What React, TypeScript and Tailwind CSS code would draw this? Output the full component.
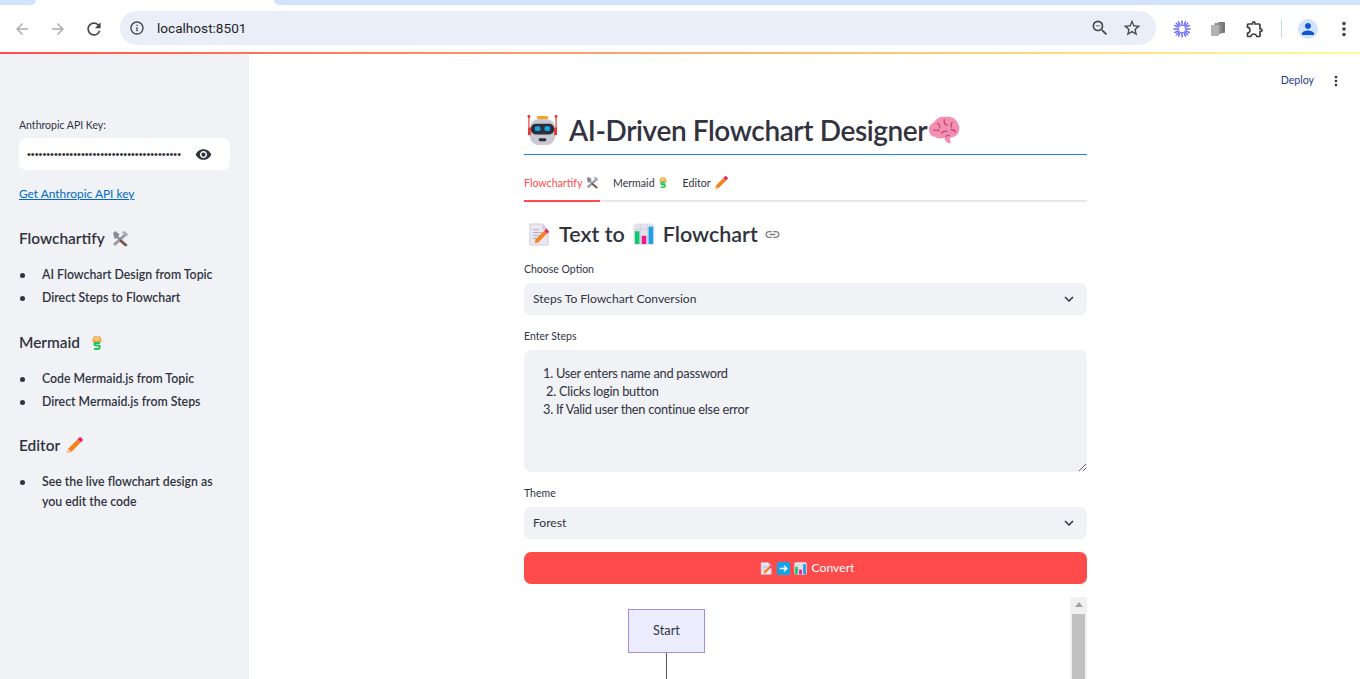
import {
  MdArrowBack,
  MdArrowForward,
  MdRefresh,
  MdInfoOutline,
  MdZoomOut,
  MdStarBorder,
  MdOutlineExtension,
  MdMoreVert,
  MdPerson,
  MdKeyboardArrowDown,
  MdVisibility,
  MdLink,
} from "react-icons/md";

function Robot({ size = 32 }: { size?: number }) {
  return (
    <svg width={size} height={size} viewBox="0 0 32 32">
      <rect x="10" y="1" width="12" height="3" rx="1.5" fill="#f5a623" />
      <circle cx="2" cy="1.5" r="1.5" fill="#e53935" />
      <circle cx="30" cy="1.5" r="1.5" fill="#e53935" />
      <rect x="1.4" y="2" width="1.2" height="13" fill="#e53935" />
      <rect x="29.4" y="2" width="1.2" height="13" fill="#e53935" />
      <rect x="3" y="4" width="26" height="27" rx="9" fill="#c9c7d2" />
      <rect x="1" y="13" width="3" height="8" rx="1" fill="#e53935" />
      <rect x="28" y="13" width="3" height="8" rx="1" fill="#e53935" />
      <rect x="4" y="9" width="24" height="11" rx="5" fill="#2a2f3a" />
      <rect x="8" y="11.5" width="6" height="5" rx="2" fill="#1ea7e8" />
      <rect x="18" y="11.5" width="6" height="5" rx="2" fill="#1ea7e8" />
      <rect x="12" y="24" width="8" height="3" rx="1.5" fill="#2a2f3a" />
    </svg>
  );
}

function Brain({ size = 32 }: { size?: number }) {
  return (
    <svg width={size} height={size} viewBox="0 0 32 32">
      <path
        d="M6 8c2-4 7-6 11-5 5-1 10 1 12 6 2 3 2 7 0 10-2 3-5 4-8 4l1 5c-2 1-4 0-5-2l-1-3c-3 1-7 1-9-1-4 0-6-3-6-7 0-3 2-6 5-7z"
        fill="#f48fb1"
      />
      <path
        d="M9 9c2 1 3 3 2 5M16 5c-1 3 0 5 3 6M24 8c-2 1-2 3-1 5M5 16c2-1 5-1 6 1M13 19c1-2 4-3 6-2M22 15c2 0 4 1 5 3M17 22c1-1 2-2 4-1"
        fill="none"
        stroke="#c2477c"
        strokeWidth="1.3"
      />
    </svg>
  );
}

function Tools({ size = 14 }: { size?: number }) {
  return (
    <svg width={size} height={size} viewBox="0 0 16 16">
      <path d="M3 15 15 4l-2-2L1 13z" fill="#9a9aa5" />
      <path d="M1 3l2-2 4 3-1 2 9 8-1.500 1.500-9-8-2 1z" fill="#8a8a96" />
      <path d="M8 9l6 5-1.500 1.500L7 10.500z" fill="#7a4a30" />
      <path d="M9 2l3-1 3 3-1 2-3-2z" fill="#b0b0ba" />
    </svg>
  );
}

function MermaidIcon({ size = 14 }: { size?: number }) {
  return (
    <svg width={size} height={size} viewBox="0 0 16 16">
      <path d="M4 4c0-3 8-3 8 0l1 4H3z" fill="#f0b03c" />
      <circle cx="8" cy="4.500" r="2.500" fill="#f3c08a" />
      <path d="M5 7h6v2H5z" fill="#e8a050" />
      <path
        d="M11 9H6.500C5 9 5 11.500 7 11.500h2.500c2 0 1.500 3.500-1 3.500H5"
        fill="none"
        stroke="#22c55e"
        strokeWidth="2.200"
      />
    </svg>
  );
}

function Pencil({ size = 16 }: { size?: number }) {
  return (
    <svg width={size} height={size} viewBox="0 0 16 16">
      <path d="M1 15l1-4 9-9 3 3-9 9z" fill="#f58220" />
      <path d="M1 15l1-4 3 3z" fill="#f7c9a0" />
      <path d="M11 2l1.500-1.500c.6-.5 1.200-.5 1.700 0l1.300 1.300c.5.5.5 1.100 0 1.700L14 5z" fill="#e91e63" />
    </svg>
  );
}

function Memo({ size = 24 }: { size?: number }) {
  return (
    <svg width={size} height={size} viewBox="0 0 24 24">
      <path d="M2 1h13l6 6v16H2z" fill="#ece8f2" stroke="#c8c2d4" strokeWidth="0.8" />
      <path d="M15 1v6h6z" fill="#cfc8dc" />
      <path d="M5 7h7M5 10h10M5 13h7M5 16h4" stroke="#b9b3c8" strokeWidth="1.200" />
      <path d="M7 21l1-4 9-9 3 3-9 9z" fill="#f58220" />
      <path d="M17 8l2-2 3 3-2 2z" fill="#e91e63" />
    </svg>
  );
}

function BarChart({ size = 24 }: { size?: number }) {
  return (
    <svg width={size} height={size} viewBox="0 0 24 24">
      <rect x="0.500" y="0.500" width="23" height="23" rx="3" fill="#e4e2ec" />
      <path d="M8 1v22M16 1v22M1 7h22" stroke="#cfcbdc" strokeWidth="0.800" />
      <rect x="2" y="9" width="5" height="14" fill="#10c96c" />
      <rect x="9.500" y="14" width="5" height="9" fill="#ec1c8e" />
      <rect x="17" y="4" width="5" height="19" fill="#1f9fe6" />
    </svg>
  );
}

function ArrowBox({ size = 12 }: { size?: number }) {
  return (
    <svg width={size} height={size} viewBox="0 0 12 12">
      <rect width="12" height="12" rx="1.500" fill="#12a5ee" />
      <path d="M2.500 6h6M6.500 3.500 9 6 6.500 8.500" fill="none" stroke="#fff" strokeWidth="1.400" />
    </svg>
  );
}

function ExtensionBurst() {
  return (
    <svg width="18" height="18" viewBox="0 0 18 18">
      <g stroke="#6a6afa" strokeWidth="1.500" strokeLinecap="round">
        <path d="M9 1v3.500M9 13.500V17M1 9h3.500M13.500 9H17M3.300 3.300l2.500 2.500M12.200 12.200l2.500 2.500M14.700 3.300l-2.500 2.500M5.800 12.200l-2.500 2.500" />
        <path d="M5.500 1.800l1.200 2.800M11.300 13.400l1.200 2.800M12.500 1.800l-1.200 2.800M6.700 13.400l-1.200 2.800M1.800 5.500l2.800 1.200M13.400 11.300l2.800 1.200M16.200 5.500l-2.800 1.200M4.600 11.300l-2.800 1.200" />
      </g>
      <circle cx="9" cy="9" r="3.800" fill="#fff" stroke="#6a6afa" strokeWidth="1" />
    </svg>
  );
}

function PagesIcon() {
  return (
    <svg width="16" height="16" viewBox="0 0 16 16">
      <rect x="8" y="1" width="7" height="11" rx="1" fill="#777" />
      <rect x="4.500" y="2" width="7" height="11" rx="1" fill="#8f8f8f" />
      <rect x="1" y="4" width="8" height="11" rx="1" fill="#b2b2b2" />
    </svg>
  );
}

function BrowserBar() {
  return (
    <div className="shrink-0 bg-white">
      <div className="flex h-[5px]">
        <div className="w-[36px] bg-[#d3e3fd] rounded-br-[6px]" />
        <div className="w-[238px] bg-white" />
        <div className="flex-1 bg-[#d3e3fd] rounded-bl-[6px]" />
      </div>
      <div className="flex h-[47px] items-center pl-[10px] text-[#474747]">
        <div className="w-[24px] flex justify-center text-[#adadad]">
          <MdArrowBack size={18} />
        </div>
        <div className="w-[24px] ml-[12px] flex justify-center text-[#adadad]">
          <MdArrowForward size={18} />
        </div>
        <div className="w-[24px] ml-[12px] flex justify-center">
          <MdRefresh size={20} />
        </div>
        <div className="ml-[14px] -mt-[1px] w-[1036px] h-[34px] rounded-full bg-[#e9eef8] flex items-center pl-[8px] pr-[14px]">
          <div className="w-[18px] h-[18px] flex items-center justify-center">
            <MdInfoOutline size={16} />
          </div>
          <span className="ml-[11px] font-[family-name:Roboto,sans-serif] text-[13.600px] text-[#1f1f1f]">
            localhost:8501
          </span>
          <div className="flex-1" />
          <MdZoomOut size={20} />
          <div className="ml-[12px]">
            <MdStarBorder size={20} />
          </div>
        </div>
        <div className="ml-[17px] w-[18px]">
          <ExtensionBurst />
        </div>
        <div className="ml-[19px] w-[16px]">
          <PagesIcon />
        </div>
        <div className="ml-[19px] text-[#3c3c3c]">
          <MdOutlineExtension size={20} />
        </div>
        <div className="ml-[16px] w-px h-[18px] bg-[#c7d8f4]" />
        <div className="ml-[16px] w-[20px] h-[20px] rounded-full bg-[#d3e3fd] flex items-center justify-center text-[#0b57d0]">
          <MdPerson size={18} />
        </div>
        <div className="ml-[15px]">
          <MdMoreVert size={22} />
        </div>
      </div>
      <div className="h-[2px] bg-gradient-to-r from-[#ff4b4b] to-[#ffff8c]" />
    </div>
  );
}

function Bullet({ children }: { children: React.ReactNode }) {
  return (
    <li className="flex text-[12.300px] font-semibold leading-[20px]">
      <span className="w-[23px] shrink-0 flex pt-[8px]">
        <span className="ml-[1px] w-[5px] h-[5px] rounded-full bg-[#31333f]" />
      </span>
      <span>{children}</span>
    </li>
  );
}

function Sidebar() {
  return (
    <aside className="w-[249px] shrink-0 bg-[#f0f2f6] pl-[19px] pr-[19px] pt-[63px]">
      <p className="text-[10.500px] leading-[16px]">Anthropic API Key:</p>
      <div className="mt-[5px] h-[32px] w-[211px] rounded-[7px] bg-white flex items-center pl-[8px] text-[#31333f]">
        <span className="text-[11px] leading-none font-[family-name:'Liberation_Sans',sans-serif] w-[156px] overflow-hidden whitespace-nowrap">
          ••••••••••••••••••••••••••••••••••••••••
        </span>
        <span className="ml-[12px]">
          <MdVisibility size={17} />
        </span>
      </div>
      <a className="block mt-[15px] text-[11.900px] leading-[18px] text-[#0068c9] underline">Get Anthropic API key</a>
      <h3 className="mt-[23px] flex items-center gap-[7px] text-[15.400px] font-semibold leading-[24px]">
        Flowchartify <Tools size={17} />
      </h3>
      <ul className="mt-[15px] flex flex-col gap-[3px]">
        <Bullet>AI Flowchart Design from Topic</Bullet>
        <Bullet>Direct Steps to Flowchart</Bullet>
      </ul>
      <h3 className="mt-[22px] flex items-center gap-[9px] text-[15.400px] font-semibold leading-[24px]">
        Mermaid <MermaidIcon size={16} />
      </h3>
      <ul className="mt-[15px] flex flex-col gap-[3px]">
        <Bullet>Code Mermaid.js from Topic</Bullet>
        <Bullet>Direct Mermaid.js from Steps</Bullet>
      </ul>
      <h3 className="mt-[21px] flex items-center gap-[6px] text-[15.400px] font-semibold leading-[24px]">
        Editor <Pencil size={17} />
      </h3>
      <ul className="mt-[15px]">
        <Bullet>See the live flowchart design as you edit the code</Bullet>
      </ul>
    </aside>
  );
}

function SelectBox({ value }: { value: string }) {
  return (
    <div className="h-[32px] rounded-[7px] bg-[#f0f2f6] flex items-center justify-between pl-[9px] pr-[9px] text-[12.100px]">
      <span>{value}</span>
      <MdKeyboardArrowDown size={18} />
    </div>
  );
}

function MainColumn() {
  return (
    <main className="flex-1 min-w-0 relative flex justify-center overflow-hidden">
      <div className="absolute top-[19px] right-[16px] flex items-center text-[#31333f]">
        <span className="text-[10.600px] text-[#2b3a8c]">Deploy</span>
        <span className="ml-[14px]">
          <MdMoreVert size={16} />
        </span>
      </div>
      <div className="w-[563px] ml-[2px] pt-[53px]">
        <div className="h-[47px] flex items-center text-[28px] tracking-[-0.400px] font-semibold leading-[40px] pl-[3px]">
          <Robot size={31} />
          <h1 className="ml-[11px] -mt-[2px]">AI-Driven Flowchart Designer</h1>
          <span className="ml-[1px]">
            <Brain size={33} />
          </span>
        </div>
        <div className="h-px bg-[#1c83e1]" />
        <div className="mt-[18px] flex h-[27px] text-[10.600px] leading-[20px]">
          <div className="flex items-start gap-[4px] w-[76px] text-[#ff4b4b]">
            Flowchartify
            <span className="mt-[3px]">
              <Tools size={13} />
            </span>
          </div>
          <div className="ml-[13px] flex items-start gap-[2px]">
            Mermaid
            <span className="mt-[3px]">
              <MermaidIcon size={12} />
            </span>
          </div>
          <div className="ml-[14px] flex items-start gap-[3px]">
            Editor
            <span className="mt-[3px]">
              <Pencil size={14} />
            </span>
          </div>
        </div>
        <div className="h-[2px] bg-[#e6e8ec]">
          <div className="w-[76px] h-[2px] bg-[#ff4b4b]" />
        </div>
        <h2 className="mt-[18px] h-[28px] flex items-center text-[21.500px] font-semibold pl-[4px]">
          <Memo size={23} />
          <span className="ml-[8px]">Text to</span>
          <span className="ml-[8px]">
            <BarChart size={22} />
          </span>
          <span className="ml-[8px]">Flowchart</span>
          <span className="ml-[6px] text-[#7d7f88]">
            <MdLink size={17} />
          </span>
        </h2>
        <p className="mt-[13px] text-[10.500px] leading-[16px]">Choose Option</p>
        <div className="mt-[6px]">
          <SelectBox value="Steps To Flowchart Conversion" />
        </div>
        <p className="mt-[13px] text-[10.500px] leading-[16px]">Enter Steps</p>
        <textarea
          readOnly
          className="mt-[6px] block w-full h-[122px] rounded-[7px] bg-[#f0f2f6] pl-[19px] pr-[9px] py-[14px] text-[12.800px] tracking-[-0.250px] leading-[18px] outline-none"
          value={"1. User enters name and password\n 2. Clicks login button\n3. If Valid user then continue else error"}
        />
        <p className="mt-[13px] text-[10.500px] leading-[16px]">Theme</p>
        <div className="mt-[6px]">
          <SelectBox value="Forest" />
        </div>
        <button className="mt-[13px] w-full h-[32px] rounded-[7px] bg-[#ff4b4b] pl-[3px] text-white text-[12.200px] flex items-center justify-center gap-[4px]">
          <Memo size={13} />
          <ArrowBox size={13} />
          <BarChart size={13} />
          <span className="ml-[1px]">Convert</span>
        </button>
        <div className="mt-[13px] flex h-[82px]">
          <div className="flex-1 pl-[104px] pt-[12px]">
            <div className="w-[77px] h-[44px] bg-[#ececff] border border-[#a78be2] flex items-center justify-center text-[12.800px]">
              Start
            </div>
            <div className="ml-[38px] w-px h-[30px] bg-[#555555]" />
          </div>
          <div className="w-[17px] bg-[#f1f1f1] flex flex-col items-center">
            <div className="mt-[5px] w-0 h-0 border-x-[4px] border-x-transparent border-b-[5px] border-b-[#a3a3a3]" />
            <div className="mt-[7px] w-[13px] flex-1 bg-[#c1c1c1]" />
          </div>
        </div>
      </div>
    </main>
  );
}

export default function App() {
  return (
    <div className="h-[679px] w-[1360px] overflow-hidden flex flex-col bg-white text-[#31333f] font-[family-name:Lato,sans-serif]">
      <BrowserBar />
      <div className="flex-1 min-h-0 flex">
        <Sidebar />
        <MainColumn />
      </div>
    </div>
  );
}
